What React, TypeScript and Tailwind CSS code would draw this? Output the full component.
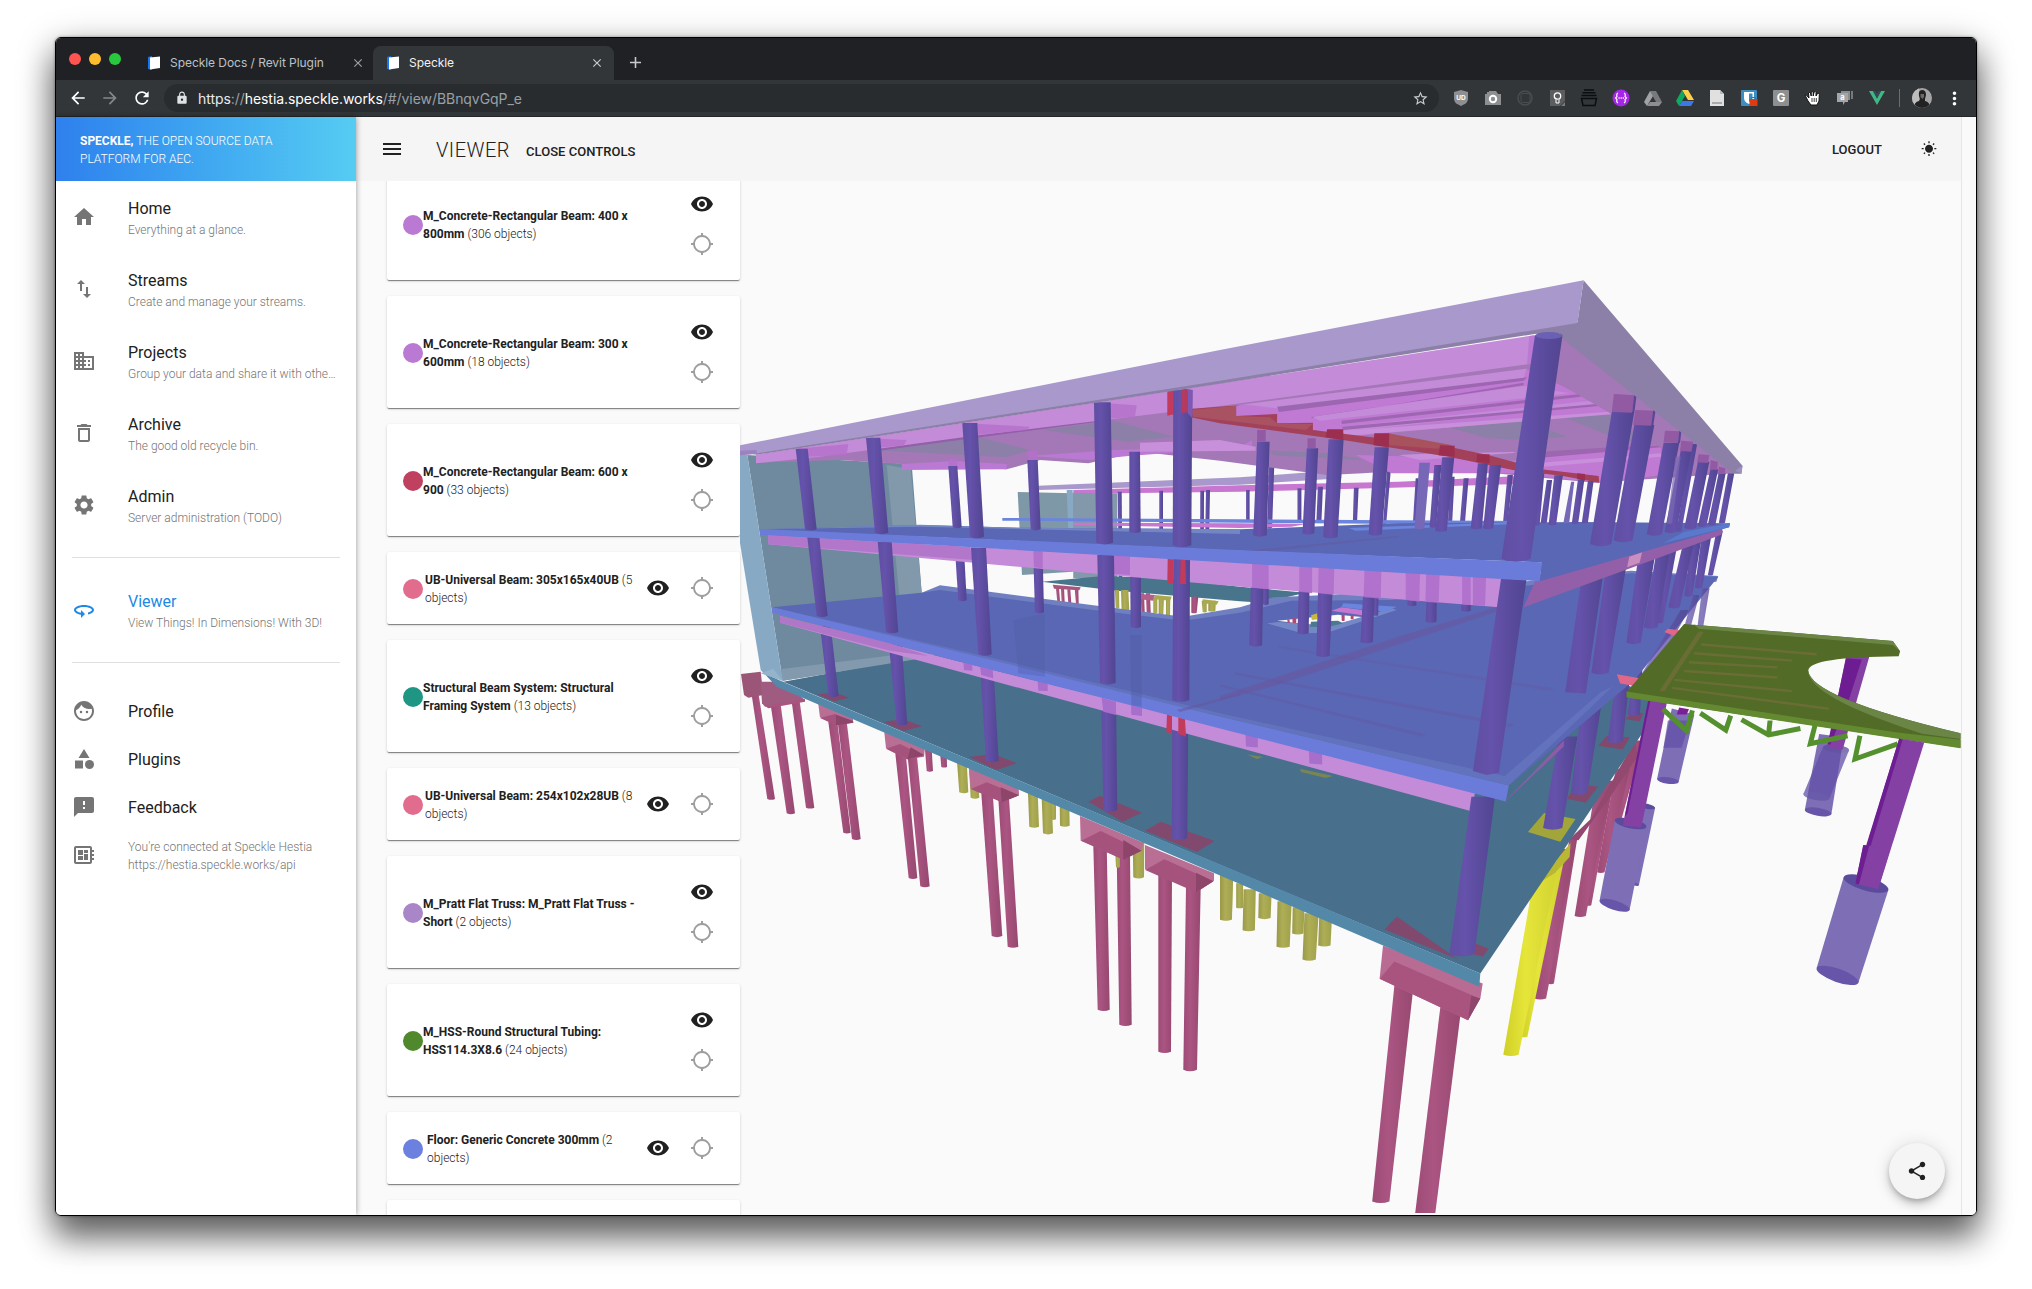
import React from "react";
import {
  MdHome, MdImportExport, MdBusiness, MdDeleteOutline, MdSettings, Md360, MdFace, MdCategory,
  MdFeedback, MdDeveloperBoard, MdVisibility, MdLocationSearching, MdShare, MdWbSunny, MdMenu,
  MdLock, MdArrowBack, MdArrowForward, MdRefresh, MdStarBorder, MdMoreVert, MdClose, MdAdd,
} from "react-icons/md";

/* ---------- 3D model ---------- */

// The model is laid out on four sheets, each with its own origin and scale.
const SHEETS: Record<string, [number, number, number, number]> = {
  a: [740, 260, 1 / 3, 1 / 3],
  b: [1220, 260, 1 / 2.8, 1 / 3],
  c: [740, 660, 1 / 3, 1 / 3],
  d: [1220, 620, 770 / 1568, 630 / 1568],
};
const xy = (s: string, x: number, y: number): [number, number] => {
  const [ox, oy, sx, sy] = SHEETS[s];
  return [ox + x * sx, oy + y * sy];
};
const at = (s: string, x: number, y: number) => xy(s, x, y).map((v) => v.toFixed(1)).join(",");
const P = ({ f, p, o = 1 }: { f: string; p: string; o?: number }) => (
  <polygon
    fill={f}
    opacity={o}
    points={p.split(" ").map((t) => {
      const [x, y] = t.slice(1).split(",").map(Number);
      return at(t[0], x, y);
    }).join(" ")}
  />
);
// left/right/y at the top, then left/right/y at the bottom
type Col = [number, number, number, number, number, number];
const Cols = ({ s, list, f = "url(#col)", o = 1 }: { s: string; list: Col[]; f?: string; o?: number }) => (
  <g opacity={o}>
    {list.map(([l, r, y, l2, r2, y2], i) => {
      const [p1, p2, p3, p4, m] = [at(s, l, y), at(s, r, y), at(s, r2, y2), at(s, l2, y2), at(s, (l2 + r2) / 2, y2 + (r2 - l2) * 0.22)];
      return <path key={i} fill={f} d={`M${p1}L${p2}L${p3}Q${m} ${p4}Z`} />;
    })}
  </g>
);
// Translucent footing: top-left, top-right, bottom-right, bottom-left corners on sheet d
const Footing = ({ q, top = true, f = "#7d6eb5", o = 1 }: { q: number[]; top?: boolean; f?: string; o?: number }) => {
  const [A, B, C, D] = [0, 2, 4, 6].map((i) => xy("d", q[i], q[i + 1]));
  const cap = (L: number[], R: number[], fill: string) => {
    const [cx, cy] = [(L[0] + R[0]) / 2, (L[1] + R[1]) / 2];
    const rx = Math.hypot(R[0] - L[0], R[1] - L[1]) / 2;
    const deg = (Math.atan2(R[1] - L[1], R[0] - L[0]) * 180) / Math.PI;
    return <ellipse cx={cx} cy={cy} rx={rx} ry={rx * 0.3} transform={`rotate(${deg} ${cx} ${cy})`} fill={fill} />;
  };
  return (
    <g opacity={o}>
      <polygon points={[A, B, C, D].map((v) => v.join(",")).join(" ")} fill={f} />
      {top && cap(A, B, "#5b4b9d")}
      {cap(D, C, "#6655a8")}
    </g>
  );
};

const PINK = "#c48bd8";
const MAG = "#ba79d2";
const DIM = "#a477b6";

function Model() {
  return (
    <svg className="block h-[1032px] w-[1221px]" viewBox="740 181 1221 1032">
      <defs>
        <linearGradient id="col"><stop offset="0" stopColor="#5f4fa2" /><stop offset=".35" stopColor="#6552ab" /><stop offset="1" stopColor="#514591" /></linearGradient>
        <linearGradient id="pile"><stop offset="0" stopColor="#9c4c76" /><stop offset=".4" stopColor="#ab5582" /><stop offset="1" stopColor="#964870" /></linearGradient>
        <linearGradient id="olive"><stop offset="0" stopColor="#98984a" /><stop offset=".4" stopColor="#aeae56" /><stop offset="1" stopColor="#a0a04c" /></linearGradient>
        <linearGradient id="yel"><stop offset="0" stopColor="#cfcf28" /><stop offset=".4" stopColor="#e5e53a" /><stop offset="1" stopColor="#d2d232" /></linearGradient>
      </defs>

      {/* rear wing */}
      <P f="#a898cc" p="a895,677 a1500,652 b340,630 b340,655 a1500,674 a895,690" />
      <P f="#c777d0" p="a1000,690 a1500,676 b500,665 b900,645 b900,670 b480,683 a1500,695 a1000,701" />
      <P f="#7f98a8" p="a833,696 a998,700 a998,935 a846,945" />
      <P f="#8398ab" p="a998,698 a1132,700 a1132,958 a1000,955" />
      <P f="#87a9c3" p="a980,690 a998,690 a1000,808 a985,808" />
      <Cols s="a" list={[[1133, 1145, 695, 1137, 1147, 975], [1258, 1269, 692, 1258, 1269, 986], [1381, 1392, 692, 1380, 1391, 980], [1398, 1410, 690, 1393, 1404, 998]]} />
      <Cols s="b" list={[[73, 83, 690, 73, 83, 780], [217, 228, 685, 217, 228, 782], [375, 388, 683, 372, 384, 782], [274, 288, 680, 270, 284, 785], [138, 153, 588, 132, 146, 803], [470, 481, 595, 455, 464, 810], [548, 556, 655, 540, 550, 790], [682, 696, 655, 672, 686, 786], [645, 657, 650, 638, 650, 790], [805, 820, 645, 792, 805, 792]]} />
      <P f="#6b85dc" p="a787,774 a1500,778 b850,783 b850,794 a1500,788 a787,782" />
      <P f="#c777d0" p="a1000,788 a1500,790 b240,792 b200,800 a1500,804 a1000,795" />
      <P f="#48748c" p="a905,965 a1090,948 a1280,955 a1500,980 b240,998 b120,1028 a1500,1024 a1130,992" />
      <Cols s="a" f="url(#pile)" list={[[948, 957, 985, 952, 960, 1025], [963, 972, 985, 965, 974, 1028], [982, 991, 988, 985, 994, 1030], [1004, 1015, 985, 1008, 1016, 1032], [1202, 1212, 1000, 1204, 1214, 1056], [1218, 1230, 1000, 1220, 1232, 1058], [1354, 1375, 1010, 1354, 1370, 1058]]} />
      <P f="#a8557e" p="a938,974 a1022,982 a1018,991 a942,986" />
      <P f="#b0608a" p="a1198,1002 a1245,1005 a1240,1022 a1198,1018" />
      <Cols s="a" f="url(#olive)" list={[[1125, 1137, 990, 1127, 1138, 1045], [1143, 1165, 990, 1145, 1168, 1052], [1240, 1252, 1010, 1240, 1252, 1058], [1256, 1272, 1010, 1256, 1270, 1062], [1278, 1291, 1010, 1278, 1290, 1066], [1385, 1400, 1022, 1388, 1400, 1056], [1405, 1428, 1022, 1405, 1426, 1053]]} />
      <P f="#aaa94f" p="a1245,1005 a1295,1010 a1290,1022 a1245,1018" />
      <P f="#aaa94f" p="a1388,1018 a1436,1024 a1430,1034 a1388,1030" />

      {/* piles and pile caps below the slab */}
      <Cols s="c" f="url(#pile)" list={[[35, 56, 105, 82, 105, 417], [92, 122, 135, 140, 165, 460], [155, 179, 125, 198, 223, 443], [265, 292, 185, 310, 332, 518], [293, 320, 185, 336, 362, 537], [466, 497, 280, 506, 532, 654], [503, 531, 290, 541, 569, 679], [555, 575, 268, 560, 579, 333], [601, 620, 285, 604, 621, 321], [724, 758, 400, 755, 787, 828], [775, 807, 415, 803, 835, 860], [1060, 1100, 555, 1073, 1109, 1049], [1130, 1170, 585, 1138, 1175, 1094], [1255, 1296, 645, 1255, 1293, 1175], [1338, 1382, 680, 1330, 1371, 1229]]} />
      <Cols s="c" f="url(#olive)" list={[[651, 680, 305, 658, 685, 397], [687, 712, 325, 692, 718, 413], [864, 893, 400, 868, 897, 500], [930, 948, 430, 932, 948, 478], [905, 935, 415, 909, 939, 520], [959, 988, 435, 960, 989, 497], [1126, 1140, 580, 1128, 1140, 622], [1178, 1213, 545, 1180, 1212, 652], [1442, 1478, 645, 1440, 1476, 777]]} />
      <Cols s="d" f="url(#olive)" list={[[0, 27, 630, 0, 24, 746], [33, 47, 655, 33, 47, 716], [48, 73, 670, 46, 71, 772], [79, 105, 680, 78, 103, 742], [148, 172, 715, 147, 170, 780], [117, 146, 700, 115, 142, 813], [202, 228, 740, 200, 225, 810], [172, 201, 730, 168, 195, 845]]} />
      <P f="#9b5577" p="c3,42 c62,35 c70,105 c25,113 c12,105" />
      <P f="#9f5c80" p="c62,65 c130,65 c195,120 c75,140 c66,130" />
      <P f="#a9547f" p="c75,137 c195,117 c195,125 c85,145" />
      {["c234,125 c240,172 c285,192 c340,188 c338,172", "c432,208 c438,265 c500,298 c552,290 c555,262", "c687,325 c692,385 c785,425 c837,405 c836,385", "c1020,468 c1022,542 c1150,598 c1206,572 c1210,548", "c1215,555 c1215,628 c1370,696 c1422,662 c1422,640"].map((p) => <P key={p} f="#b96e94" p={p} />)}
      {["c285,162 c240,174 c288,196 c340,188", "c480,252 c438,266 c502,298 c552,288", "c740,367 c692,387 c785,427 c837,406", "c1082,513 c1024,542 c1150,599 c1204,572", "c1273,598 c1216,630 c1368,697 c1420,664"].map((p) => <P key={p} f="#a5527c" p={p} />)}
      {["c288,164 c338,182 c340,188 c288,196", "c512,262 c552,285 c502,298", "c782,382 c837,406 c785,427", "c1150,540 c1204,572 c1150,599", "c1368,638 c1420,664 c1368,697"].map((p) => <P key={p} f="#8d456a" p={p} />)}
      <Cols s="d" f="url(#pile)" list={[[845, 862, 300, 800, 812, 520], [806, 835, 370, 768, 783, 628], [778, 802, 400, 744, 756, 710], [764, 795, 420, 722, 745, 737], [712, 728, 540, 668, 680, 905], [690, 722, 570, 640, 664, 942]]} />
      <P f="#92486f" p="d712,545 d755,495 d845,300 d850,340 d800,430 d730,548" />
      <Cols s="d" f="url(#yel)" list={[[672, 700, 600, 612, 626, 1037], [645, 690, 600, 577, 608, 1082]]} />
      <P f="#b8b833" p="d655,650 d690,590 d714,555 d712,590 d682,630" />
      <Cols s="d" f="url(#pile)" list={[[356, 395, 900, 310, 345, 1447], [450, 493, 950, 396, 437, 1490]]} />
      <P f="#b86c93" p="d332,810 d325,893 d505,996 d530,942 d535,905" />
      <P f="#a9547f" p="d355,850 d528,942 d505,996 d325,893" />
      <P f="#8f466c" p="d530,942 d505,996 d512,935" />

      {/* shear wall on the left */}
      <P f="#6f8a9e" p="a22,585 a515,612 a545,998 a575,1190 a128,1262" />
      <P f="#8298ab" p="a440,615 a512,628 a545,998 a478,1008" />
      <P f="#708ba0" p="a440,1000 a478,1003 a500,1200 a440,1200" />

      {/* ground slab */}
      <P f="#48708c" p="c130,65 a580,1183 b500,1100 b1160,1130 d825,160 d905,200 d530,880 c1500,640" />
      <P f="#5388a9" p="c72,40 c135,68 c1500,638 d530,880 d528,913 c1500,672 c110,80" />
      <P f="#839aae" p="a120,1228 a520,1178 a575,1190 a500,1202 a128,1262" />
      <P f="#87a9c4" p="a0,585 a22,585 a128,1262 a75,1244 a62,1230 a0,850" />
      <P f="#95b4cc" p="a62,1240 a100,1226 a128,1262" />
      {["c232,103 c288,98 c328,113 c282,124", "c430,185 c490,178 c547,199 c490,213", "c687,291 c760,282 c831,310 c770,330", "c1045,425 c1080,407 c1206,458 c1148,485", "c1215,512 c1262,485 c1424,543 c1370,576", "d335,770 d360,738 d485,845", "d520,805 d547,818 d535,838 d505,828", "d706,445 d728,408 d770,415 d745,455", "d770,313 d788,288 d835,292 d820,322", "d826,247 d840,228 d862,232 d855,252"].map((p) => <P key={p} f="#82496e" p={p} />)}
      <P f="#a2a63a" p="d627,528 d660,480 d724,495 d693,552" />
      <P f="#7a8552" p="d163,370 d230,388 d215,393 d165,378" />
      <P f="#7a8552" p="d55,335 d88,341 d75,346" />
      <Cols s="a" list={[[240, 272, 1098, 265, 296, 1308], [446, 485, 1150, 470, 502, 1393], [720, 760, 1215, 738, 776, 1503], [1083, 1128, 1305, 1090, 1132, 1650], [1297, 1345, 1365, 1295, 1342, 1735]]} />
      <Cols s="d" list={[[848, 862, 80, 830, 855, 235], [690, 728, 290, 658, 697, 518], [738, 778, 200, 714, 748, 431], [806, 834, 150, 789, 820, 303]]} />

      {/* first floor */}
      <P f="#c48bd8" p="a120,1068 c640,0 d0,265 d520,425 d512,476 d0,305 c1500,265 c530,0 a120,1088" />
      <P f="#b077c9" p="a120,1068 a440,1145 a565,1188 a450,1172 a120,1088" />
      {["c670,0 c697,12 c697,32 c672,30", "c720,18 c758,28 c760,55 c724,45", "c893,62 c923,72 c923,93 c895,92", "c1085,113 c1128,125 c1128,165 c1090,155", "c1173,130 c1206,142 c1206,168 c1174,164", "d52,285 d77,292 d77,317 d53,315", "d181,325 d208,333 d208,360 d182,357"].map((p) => <P key={p} f="#a86ecb" p={p} />)}
      <P f="#8c5ca6" p="d582,450 d700,300 d700,315 d565,470" />
      <Cols s="d" list={[[512, 560, 440, 467, 518, 832]]} />
      <P f="#c23a5c" p="c1281,163 c1296,168 c1296,220 c1279,217" />
      <P f="#c23a5c" p="c1315,172 c1335,178 c1338,230 c1315,222" />
      <P f="#6f7fc0" p="a545,998 a600,976 a1060,1036 a1330,1070 a1500,1042 b150,1012 b300,1005 b800,970 b1150,932 b1395,948 b1390,965 b800,1020 b0,1100 a1060,1100" />
      <P f="#5a67b4" p="a97,1042 a545,998 a600,990 a1060,1050 a1330,1082 a1500,1058 b200,1022 b480,1020 b800,985 b1150,940 b1395,950 d844,149 d588,412 c740,0" />
      <P f="#6b7bc4" p="a97,1042 c740,0 d0,240 d588,412 d800,165 d775,180 d580,388 d0,232 c760,-6" o={0.55} />
      <P f="#6a7bda" p="a97,1042 c740,-4 d0,240 d588,412 d582,452 d0,270 c1080,112 c640,0 a97,1058" />
      <P f="#fafafa" p="b160,1082 b330,1064 b405,1072 b300,1100" />
      <Cols s="b" f="#b04a72" list={[[188, 194, 1078, 190, 196, 1090], [203, 214, 1074, 203, 213, 1090], [340, 349, 1064, 341, 349, 1082], [366, 374, 1066, 366, 374, 1077]]} />
      <P f="#7388c4" p="b132,1090 b165,1086 b310,1098 b480,1045 b495,1050 b300,1118 b230,1120" />
      <P f="#c777d0" p="b312,1052 b340,1042 b398,1050 b398,1066" />
      <P f="#6a85de" p="b345,1030 b495,1040 b465,1055 b340,1042" />
      <P f="#c9b93a" p="b255,1066 b273,1060 b273,1078 b257,1080" />
      <P f="#4a7a8e" p="b255,1085 b330,1082 b345,1090 b300,1102 b252,1100" />
      <P f="#6658a0" p="b780,1040 b810,1042 b300,1225 b160,1275 d0,200 d0,190 b500,1130" o={0.7} />
      <P f="#6658a0" p="d30,130 d600,260 d590,266 d30,136" o={0.45} />
      <P f="#6658a0" p="d0,160 d420,285 d410,290 d0,166" o={0.4} />
      <P f="#6658a0" p="c1310,150 c1500,100 c1500,106 c1320,156" o={0.6} />
      <P f="#6658a0" p="d120,65 d680,170 d670,176 d120,70" o={0.35} />
      <P f="#4f5ca6" p="a820,1080 a915,1060 a915,1250 a835,1240" o={0.35} />
      <P f="#4f5ca6" p="a1170,1125 a1205,1125 a1205,1340 a1174,1335" o={0.4} />

      {/* columns of the first floor */}
      <Cols s="a" list={[[645, 672, 870, 655, 680, 1021], [880, 908, 890, 885, 912, 1057], [1170, 1203, 890, 1172, 1203, 1101]]} />
      <Cols s="b" list={[[118, 136, 930, 120, 136, 1033], [523, 548, 960, 525, 550, 1036], [676, 702, 960, 676, 702, 1052], [580, 608, 955, 576, 606, 1085], [88, 122, 915, 82, 118, 1156], [222, 252, 920, 217, 248, 1120], [276, 318, 925, 270, 307, 1187], [430, 445, 935, 430, 443, 1066], [405, 435, 930, 393, 428, 1146]]} />
      <Cols s="b" list={[[1390, 1408, 812, 1366, 1380, 945], [1350, 1378, 815, 1330, 1350, 983], [1322, 1350, 825, 1300, 1322, 1008], [1300, 1330, 835, 1255, 1287, 1042], [1255, 1282, 845, 1225, 1240, 1088], [1225, 1262, 855, 1187, 1225, 1102], [1175, 1222, 862, 1138, 1178, 1148], [1085, 1142, 890, 1040, 1088, 1238]]} />
      <Cols s="b" o={0.75} list={[[1350, 1371, 985, 1337, 1353, 1100], [1325, 1342, 1005, 1300, 1318, 1100], [1290, 1312, 1050, 1170, 1205, 1260]]} />
      <P f="url(#col)" p="b1018,908 b1078,905 d745,183 d703,180" />

      {/* second floor */}
      <P f="#935fa8" p="b890,945 b1408,800 b1404,824 b850,1042" />
      <P f="#c98fc0" p="b1146,890 b1182,877 b1175,908 b1140,922" />
      <P f={PINK} p="a85,826 b0,903 b790,955 b782,1042 b0,975 a85,853" />
      <P f="#b277ca" p="a85,826 a690,862 a700,900 a85,853" />
      {["a735,868 a740,905 a710,900 a705,865", "a880,872 a908,874 a908,925 a882,922", "a1088,885 a1170,888 a1170,945 a1090,940", "b90,908 b136,910 b136,988 b90,983", "b222,915 b258,917 b258,1000 b222,995", "b276,918 b320,920 b318,1005 b275,1000", "b405,925 b452,928 b450,1016 b402,1012", "b520,935 b560,938 b558,1025 b520,1020", "b577,940 b615,942 b612,1028 b575,1026", "b678,948 b702,950 b702,1035 b678,1033", "b708,950 b745,952 b742,1037 b708,1034"].map((p) => <P key={p} f="#ad6dca" p={p} o={0.85} />)}
      <Cols s="a" list={[[202, 238, 832, 230, 263, 1067], [413, 455, 846, 438, 475, 1116], [693, 738, 863, 715, 755, 1183], [1072, 1122, 885, 1080, 1127, 1268], [1300, 1350, 897, 1297, 1348, 1320]]} />
      <P f="#c23a5c" p="a1283,897 a1301,898 a1299,970 a1282,970" />
      <P f="#c23a5c" p="a1322,900 a1336,900 a1338,972 a1320,972" />
      <P f="url(#col)" p="b787,955 b858,960 d568,380 d543,386 d515,376" />
      <P f="#5a67b4" p="a60,808 a540,795 a835,803 a1500,808 b500,790 b1000,786 b1428,790 b1425,802 b895,964 b900,907 b0,870" />
      <P f="#7386c4" p="a60,808 a540,794 a835,803 a1500,808 a1500,822 a1190,815 a540,800" />
      <P f="#6b85dc" p="b360,804 b830,786 b830,792 b380,812" />
      <P f="#6658a0" p="b0,880 b500,828 b500,832 b60,882" o={0.5} />
      <P f="#6a7bda" p="a60,807 b0,868 b902,907 b895,964 b0,906 a60,824" />
      <P f="#5a78cc" p="b1300,815 b1428,789 b1426,802 b1240,850" />

      {/* roof soffit and beams */}
      <P f={DIM} p="a50,586 b0,380 b880,230 b960,230 b1440,640 b1050,668 b620,625 b400,640 b300,645 b0,602 a1200,575 a1045,610 a900,600 a800,628 a485,612 a300,600 a50,608" />
      <P f="#8c80a8" p="a300,565 a670,520 a870,570 a800,592" />
      <P f="#8c80a8" p="a910,510 a1120,482 a1300,530 a1165,545" />
      <P f="#8c80a8" p="b140,572 b300,580 b400,598 b380,600 b150,586" />
      <P f="#8c80a8" p="b640,502 b840,475 b970,530 b780,545" />
      <P f="#8c80a8" p="b960,470 b1095,465 b1200,548 b1120,540" />
      <P f="#c07ad4" p="b380,585 b560,590 b820,602 b1235,552 b1235,600 b1280,640 b1060,668 b820,640 b480,640" />
      <P f="#c88fdb" p="b500,585 b800,570 b830,578 b560,600" />
      <P f="#c88fdb" p="b850,612 b1235,580 b1235,590 b850,625" />
      <P f="#9c66b0" p="b830,580 b1120,560 b1235,556 b1235,562 b880,595" />
      <P f={DIM} p="b470,518 b850,540 b840,575 b650,580" />
      <P f={MAG} p="a485,612 a640,603 a800,612 a800,628 a485,630" />
      <P f={MAG} p="a862,588 a1120,570 a1500,560 b90,540 b90,560 a1165,588 a1045,600" />
      <P f="#c88fdb" p="a1200,548 a1440,540 b100,560 b100,572 a1200,575" />
      <P f="#c07ad4" p="b40,430 b860,328 b1010,405 b1095,460 b350,530 b260,510 b160,490 b45,468" />
      <P f={PINK} p="b40,430 b860,320 b850,355 b160,445" />
      <P f="#9c66b0" p="b160,440 b860,352 b850,362 b165,456" />
      <P f="#9c66b0" p="b255,475 b850,368 b850,376 b258,470" />
      <P f={PINK} p="b258,470 b850,378 b980,400 b280,482" />
      <P f="#9c66b0" p="b340,482 b1010,402 b1010,410 b342,492" />
      <P f={PINK} p="b342,500 b1040,422 b1055,432 b350,515" />
      <P f="#9c66b0" p="b342,500 b1055,432 b1060,438 b345,510" />
      <P f="#c88fdb" p="b345,512 b1090,455 b1095,463 b350,528" />
      <P f={DIM} p="b0,428 b862,308 b866,325 b45,436" />
      <P f={DIM} p="b940,365 b960,230 b1440,640 b1230,560 b1110,470" />
      <P f="#935fa8" p="a385,566 a680,528 a1062,478 a1115,480 a720,532 a395,575" />
      <P f={PINK} p="a48,584 b0,370 b880,226 b868,312 b0,438 a680,530 a240,590 a48,610" />
      {["a172,566 a325,552 a320,585 a175,592", "a383,535 a500,540 a492,556 a385,566", "a678,490 a870,500 a860,510 a680,528", "a1078,428 a1190,436 a1185,470 a1080,478", "a625,596 a652,594 a652,618 a627,619", "a862,572 a893,571 a893,600 a863,600"].map((p) => <P key={p} f="#b56fcc" p={p} o={0.8} />)}
      <P f="#a3405a" p="a1345,447 a1500,436 b45,435 b45,468 b160,462 b160,490 b260,488 b260,510 b640,560 b750,585 b900,628 b1060,648 b1062,668 b960,648 b820,630 b640,590 b345,540 b0,490 a1345,470" />
      <P f="#a85262" p="a1350,450 b45,437 b45,468 b140,472 b160,490 b260,492 b240,510 a1360,470" />
      <P f="#a8525e" p="b470,520 b650,556 b610,566 b475,556" />
      {["b300,508 b345,508 b345,540 b296,532", "b432,520 b474,520 b472,562 b430,556", "b616,556 b657,557 b657,590 b612,586", "b720,583 b755,583 b755,610 b718,606", "b1000,640 b1022,642 b1022,662 b1000,658"].map((p) => <P key={p} f="#9c2f50" p={p} />)}

      {/* columns of the second floor */}
      <Cols s="a" list={[[167, 203, 566, 195, 230, 808], [378, 421, 533, 405, 445, 818], [625, 652, 618, 638, 665, 802], [667, 712, 489, 690, 732, 830], [862, 893, 600, 872, 902, 808], [1062, 1112, 427, 1069, 1119, 848], [1168, 1200, 575, 1168, 1202, 815]]} />
      <Cols s="b" f="#7668b6" list={[[558, 588, 608, 545, 572, 805], [983, 992, 665, 962, 978, 786]]} />
      <Cols s="b" list={[[600, 620, 615, 587, 605, 802], [104, 139, 545, 93, 131, 826], [243, 275, 565, 231, 264, 820], [304, 346, 538, 289, 329, 831], [433, 473, 562, 416, 453, 823], [622, 656, 592, 603, 635, 812], [722, 750, 610, 702, 733, 805], [755, 787, 615, 737, 765, 805], [915, 930, 660, 898, 915, 788], [936, 960, 646, 920, 941, 794], [890, 908, 640, 880, 895, 795], [1002, 1020, 660, 985, 1003, 790], [1030, 1046, 663, 1013, 1030, 788]]} />
      <Cols s="b" list={[[1422, 1440, 640, 1397, 1414, 788], [1396, 1416, 640, 1366, 1387, 794], [1373, 1395, 628, 1338, 1362, 798], [1338, 1370, 605, 1300, 1333, 804], [1320, 1336, 552, 1278, 1292, 814], [1290, 1320, 572, 1245, 1278, 815], [1242, 1286, 548, 1195, 1237, 823], [1160, 1216, 495, 1102, 1155, 841], [1097, 1160, 456, 1036, 1096, 852]]} />
      <Cols s="b" f="#7a69b4" o={0.7} list={[[1275, 1290, 590, 1252, 1266, 790]]} />
      {["b1103,402 b1160,406 b1154,458 b1097,456", "b1163,450 b1213,452 b1207,497 b1157,495", "b1246,512 b1286,514 b1282,549 b1242,547", "b1292,542 b1325,545 b1320,575 b1288,573", "b1340,583 b1370,585 b1366,609 b1336,607", "b1374,600 b1394,606 b1392,630 b1372,628", "b1397,620 b1415,625 b1413,642 b1395,642", "b104,510 b128,510 b128,545 b104,545", "b245,535 b268,535 b268,564 b245,564"].map((p) => <P key={p} f="#925aa2" p={p} />)}
      {["b1160,402 b1167,402 b1160,458 b1154,458", "b1213,450 b1220,450 b1213,497 b1207,497", "b1286,512 b1292,514 b1288,549 b1282,549"].map((p) => <P key={p} f="#5a4798" p={p} />)}
      <P f="#c23a5c" p="a1282,394 a1302,390 a1302,463 a1282,467" />
      <Cols s="a" list={[[1300, 1357, 390, 1298, 1354, 856]]} />
      <P f="#b53a60" p="a1323,388 a1343,386 a1343,457 a1323,460" />
      <P f="#7d58b4" p="a1343,387 a1358,390 a1357,475 a1343,460" />
      <P f={MAG} p="b866,228 b884,226 b876,310 b860,312" />

      {/* roof slab */}
      <P f="#8c80a8" p="a0,575 b0,360 b1001,186 b1018,61 b1463,617 b1460,641 b1438,641 b960,237 b950,219 b880,222 b0,371 a50,584" />
      <P f="#a898cc" p="a0,556 b0,270 b1018,61 b1001,189 b0,362 a50,580 a0,586" />
      <P f="#9c90be" p="b1442,632 b1463,617 b1460,641" />
      <P f="#9b82c0" p="a0,572 a50,570 a50,582 a0,586" />
      <Cols s="b" list={[[882, 959, 226, 788, 870, 896]]} />
      <ellipse cx="1549" cy="335.500" rx="13.500" ry="3.500" fill="#6a60b4" />

      {/* canopy */}
      <P f="#e06788" p="d905,30 d912,22 d960,30 d925,40" />
      <P f="#e06788" p="d808,135 d870,148 d845,164 d815,158" />
      <Footing top={false} q={[920, 220, 966, 235, 934, 403, 890, 396]} />
      <Footing top={false} q={[1220, 284, 1270, 292, 1245, 483, 1191, 472]} />
      <Footing f="#6350a8" o={0.75} q={[1228, 316, 1281, 324, 1241, 444, 1188, 433]} />
      <P f="#6350a8" o={0.75} p="d912,250 d958,250 d940,318 d903,318" />
      <Footing q={[852, 459, 886, 468, 853, 660, 835, 655]} />
      <Footing q={[804, 498, 868, 515, 834, 722, 773, 698]} />
      <P f="#8540a3" p="d872,200 d910,205 d858,516 d820,512" />
      <P f="#6d1e92" p="d872,200 d876,202 d830,480 d824,490" />
      <P f="#7a1f98" p="d935,218 d955,222 d950,235 d930,235" />
      <P f="#8540a3" p="d1275,90 d1322,92 d1268,322 d1237,318" />
      <P f="#6e1c92" p="d1275,95 d1307,98 d1280,200 d1243,310 d1237,310" />
      <path d={`M${at("d", 828, 180)}L${at("d", 945, 10)}L${at("d", 1370, 52)}L${at("d", 1385, 78)}L${at("d", 1382, 90)}Q${at("d", 1200, 92)} ${at("d", 1198, 125)}Q${at("d", 1200, 192)} ${at("d", 1508, 282)}L${at("d", 1508, 318)}L${at("d", 828, 192)}Z`} fill="#526b27" />
      <path d={`M${at("d", 1198, 125)}Q${at("d", 1200, 192)} ${at("d", 1508, 282)}L${at("d", 1508, 296)}L${at("d", 1430, 283)}Q${at("d", 1195, 190)} ${at("d", 1198, 125)}Z`} fill="#6a8546" />
      <P f="#6a8546" p="d965,12 d1370,52 d1385,78 d1370,62 d975,22" />
      <P f="#638a30" p="d828,178 d1380,280 d1508,298 d1508,319 d828,193" />
      {["d980,58 d1215,82 d1215,88 d980,64", "d965,80 d1165,98 d1165,104 d965,86", "d955,102 d1135,115 d1135,121 d955,108", "d945,124 d1135,140 d1135,146 d945,130", "d925,146 d1165,174 d1165,180 d925,152", "d920,166 d1240,218 d1240,224 d920,172", "d975,28 d985,30 d905,178 d895,176"].map((p) => <P key={p} f="#6e6f38" p={p} o={0.85} />)}
      <path
        d={[[902, 222, 950, 276, 962, 225], [978, 232, 1030, 274, 1040, 238], [1062, 248, 1117, 286, 1182, 270], [1117, 286, 1120, 252, 1120, 250], [1212, 260, 1202, 308, 1278, 288], [1303, 288, 1293, 346, 1380, 308]].map((q) => `M${at("d", q[0], q[1])}L${at("d", q[2], q[3])}L${at("d", q[4], q[5])}`).join("")}
        fill="none" stroke="#55902f" strokeWidth="5" />
      <P f="#8540a3" p="d1383,295 d1434,305 d1340,672 d1292,662" />
      <P f="#6d1e92" p="d1383,295 d1390,298 d1300,664 d1292,655" />
      <Footing q={[1270, 640, 1361, 672, 1300, 903, 1215, 866]} />
      <P f="#8540a3" p="d1310,560 d1365,570 d1340,670 d1294,656" />
      <P f="#6d1e92" p="d1310,560 d1322,562 d1301,658 d1294,656" />
    </svg>
  );
}

/* ---------- sidebar ---------- */

const NAV = [
  { t: "Home", s: "Everything at a glance.", I: MdHome },
  { t: "Streams", s: "Create and manage your streams.", I: MdImportExport },
  { t: "Projects", s: "Group your data and share it with othe…", I: MdBusiness },
  { t: "Archive", s: "The good old recycle bin.", I: MdDeleteOutline },
  { t: "Admin", s: "Server administration (TODO)", I: MdSettings },
];

function NavItem({ t, s, I, active = false }: { t: string; s: string; I: React.ElementType; active?: boolean }) {
  return (
    <div className="flex h-[72px] items-center pl-4">
      <I className={active ? "size-6 shrink-0 text-[#1e88e5]" : "size-6 shrink-0 text-[#757575]"} />
      <div className="ml-8 min-w-0 flex-1 pt-[2px]">
        <div className={active ? "text-[16px] leading-6 text-[#1e88e5]" : "text-[16px] leading-6 text-[#212121]"}>{t}</div>
        <div className="text-[12px] leading-[18px] font-light whitespace-nowrap text-[#757575]">{s}</div>
      </div>
    </div>
  );
}

function Sidebar() {
  return (
    <aside className="z-10 w-[300px] shrink-0 bg-white shadow-[0_0_6px_rgba(0,0,0,0.4)]">
      <div className="flex h-16 items-center bg-linear-to-r from-[#2f80ed] to-[#56ccf2] px-6 pt-[2px] text-[12px] leading-[18px] font-light text-white">
        <div className="w-[215px]"><b className="font-bold">SPECKLE,</b> THE OPEN SOURCE DATA PLATFORM FOR AEC.</div>
      </div>
      {NAV.map((n) => <NavItem key={n.t} {...n} />)}
      <div className="mx-4 my-4 h-px bg-[#e0e0e0]" />
      <NavItem t="Viewer" s="View Things! In Dimensions! With 3D!" I={Md360} active />
      <div className="mx-4 my-4 h-px bg-[#e0e0e0]" />
      <div className="pt-2">
        {[{ t: "Profile", I: MdFace }, { t: "Plugins", I: MdCategory }, { t: "Feedback", I: MdFeedback }].map(({ t, I }) => (
          <div key={t} className="flex h-12 items-center gap-8 pl-4">
            <I className="size-6 text-[#757575]" />
            <span className="pt-[2px] text-[16px] text-[#212121]">{t}</span>
          </div>
        ))}
        <div className="flex h-12 items-center gap-8 pl-4">
          <MdDeveloperBoard className="size-6 text-[#757575]" />
          <div className="pt-[2px] text-[12px] leading-[18px] font-light text-[#757575]">
            You're connected at Speckle Hestia<br />https://hestia.speckle.works/api
          </div>
        </div>
      </div>
    </aside>
  );
}

/* ---------- layer cards ---------- */

const LAYERS = [
  { dot: "bg-[#ba79d2]", tall: true, n: ["M_Concrete-Rectangular Beam: 400 x", "800mm"], c: ["", "(306 objects)"] },
  { dot: "bg-[#ba79d2]", tall: true, n: ["M_Concrete-Rectangular Beam: 300 x", "600mm"], c: ["", "(18 objects)"] },
  { dot: "bg-[#bf405f]", tall: true, n: ["M_Concrete-Rectangular Beam: 600 x", "900"], c: ["", "(33 objects)"] },
  { dot: "bg-[#e16c8e]", tall: false, n: ["UB-Universal Beam: 305x165x40UB", ""], c: ["(5", "objects)"] },
  { dot: "bg-[#1f9584]", tall: true, n: ["Structural Beam System: Structural", "Framing System"], c: ["", "(13 objects)"] },
  { dot: "bg-[#e16c8e]", tall: false, n: ["UB-Universal Beam: 254x102x28UB", ""], c: ["(8", "objects)"] },
  { dot: "bg-[#a986c8]", tall: true, n: ["M_Pratt Flat Truss: M_Pratt Flat Truss -", "Short"], c: ["", "(2 objects)"] },
  { dot: "bg-[#50882e]", tall: true, n: ["M_HSS-Round Structural Tubing:", "HSS114.3X8.6"], c: ["", "(24 objects)"] },
  { dot: "bg-[#6c80e0]", tall: false, n: ["Floor: Generic Concrete 300mm", ""], c: ["(2", "objects)"] },
  { dot: "bg-[#ba79d2]", tall: true, n: ["", ""], c: ["", ""] },
];

function Card({ l }: { l: (typeof LAYERS)[number] }) {
  const floor = l.n[0].startsWith("Floor");
  return (
    <div className={`${l.tall ? "h-[112px]" : "h-[72px]"} flex w-[353px] shrink-0 items-start rounded-[2px] bg-white pl-4 shadow-[0_2px_1px_-1px_rgba(0,0,0,0.3),0_1px_1px_rgba(0,0,0,0.2),0_1px_3px_rgba(0,0,0,0.14)]`}>
      <div className={`${l.dot} ${l.tall ? "mt-[47px]" : "mt-[27px]"} size-5 shrink-0 rounded-full`} />
      <div className={`${l.tall ? "mt-[39px] w-[256px]" : floor ? "mt-[19px] w-[211px] pl-1" : "mt-[19px] w-[211px] pl-[2px]"} shrink-0 text-[12px] leading-[18px] font-light whitespace-nowrap text-[#212121]`}>
        {[0, 1].map((i) => <div key={i}><b className="font-bold">{l.n[i]}</b>{l.n[i] && l.c[i] ? " " : ""}{l.c[i]}</div>)}
      </div>
      <div className={l.tall ? "mt-6 ml-[11px] flex flex-col gap-4" : "mt-6 ml-3 flex gap-5"}>
        <MdVisibility className="size-6 text-[#212121]" />
        <MdLocationSearching className="size-6 text-[#9e9e9e]" />
      </div>
    </div>
  );
}

/* ---------- browser chrome ---------- */

const Favicon = () => (
  <svg className="size-3.5 shrink-0" viewBox="0 0 14 14"><path d="M1 1l4-1v14l-4-1z" fill="#1477f0" /><path d="M3 1.500L13 .5v11.500L3 13.500z" fill="#fff" /></svg>
);

const gray = "#8d8f91";
const EXT: React.ReactNode[] = [
  <g key="0"><path d="M9 1l7 2v6c0 5-3 6-7 8-4-2-7-3-7-8V3z" fill={gray} /><text x="9" y="10.500" fontSize="6.500" fontWeight="700" textAnchor="middle" fill="#fff">UD</text></g>,
  <g key="1"><path d="M1 5h2V3h2V2h7l2 3h3v11H1z" fill={gray} /><circle cx="9" cy="10" r="3.200" fill="none" stroke="#fff" strokeWidth="2" /></g>,
  <g key="2"><circle cx="9" cy="9" r="7" fill="none" stroke="#4a4c4e" strokeWidth="1.500" /><rect x="5" y="4.500" width="9" height="9" rx="2" fill="none" stroke="#4a4c4e" /></g>,
  <g key="3"><path d="M2 1h15v11l-5 5H2z" fill="#5b5d5f" /><path d="M17 13v4h-4z" fill="#77797b" /><circle cx="9.500" cy="7" r="3.200" fill="none" stroke="#fff" strokeWidth="1.300" /><path d="M8 10.500V14h3v-3.500" fill="none" stroke="#fff" /></g>,
  <g key="4" fill="none" stroke="#0c0d0e" strokeWidth="1.500"><path d="M4 1h10M2.500 3.800h13M1.500 6.500h15M1.500 9.500h15l-1.500 7H3z" /></g>,
  <g key="5"><circle cx="9" cy="9" r="8.500" fill="#a626e8" /><path d="M6 4Q4 5 5 7.500L3.500 9 5 10.500Q4 13 6 14M12 4q2 1 1 3.500L14.500 9 13 10.500q1 2.500-1 3.500" fill="none" stroke="#fff" strokeWidth="1.100" /><path d="M6.500 9h5.500" stroke="#fff" strokeWidth="1.300" strokeDasharray="1.200 .9" /></g>,
  <g key="6"><path d="M6 2h6l6 11h-6z" fill="#77797b" /><path d="M6 2L0 13l3 4 6-10z" fill="#a0a2a4" /><path d="M3 17h12l3-4H6z" fill="#8c8e90" /></g>,
  <g key="7"><path d="M6 1h6l6 10h-6z" fill="#ffcf48" /><path d="M6 1L0 12l3 5 6-10z" fill="#11a861" /><path d="M3 17h12l3-5H6z" fill="#3b78e7" /></g>,
  <g key="8"><path d="M2 1h10l4 4v12H2z" fill="#e0e0e0" /><path d="M12 1v4h4z" fill="#bbb" /><path d="M4 14h10" stroke="#aaa" strokeWidth="2" /></g>,
  <g key="9"><rect x="1" y="1" width="16" height="16" rx="1" fill="#3c8dc0" /><path d="M4 3h10v6c0 3-2 5-5 6-3-1-5-3-5-6z" fill="#fff" /><path d="M9 4.500h3.500V9c0 2-1.500 3-3.500 4z" fill="#3c8dc0" /><rect x="9.500" y="10" width="8" height="7" fill="#dd3b12" /><path d="M11.500 10V8.500h4V10" stroke="#dd3b12" fill="none" /></g>,
  <g key="10"><rect x="1" y="1" width="16" height="16" rx="1" fill={gray} /><text x="9" y="13" fontSize="11.500" fontWeight="700" textAnchor="middle" fill="#fff">G</text></g>,
  <g key="11"><path d="M1 6q1.500-1 3 2l1 1-.5-5q1-1 2 0l.7 3V3q1-1 2 0v4l.8-4q1.500-1 2 .5L12 7l1.500-2.500q1.500-.5 1.800.8L15 12l-2 4H7L4 12z" fill="#fff" stroke="#111" strokeWidth="1" /><path d="M8 9v4M10.200 9v4M12.300 9v4" stroke="#111" strokeWidth=".8" /></g>,
  <g key="12"><path d="M1 4h11v9H9l-2 3v-3H1z" fill="#a3a5a7" /><path d="M5 2h9v9h-2V4H5z" fill="#8a8c8e" /><path d="M15 2h2v8h-2z" fill="#77797b" /><text x="6.500" y="11" fontSize="7.500" fontWeight="700" textAnchor="middle" fill="#fff">a</text></g>,
  <g key="13"><path d="M1 2h4l4 7.500L13 2h4L9 16z" fill="#41b883" /><path d="M5 2h2.500L9 5l1.500-3H13L9 9.500z" fill="#35495e" /></g>,
];

function Chrome() {
  return (
    <header className="shrink-0 font-[Inter,sans-serif]">
      <div className="flex h-[42px] bg-[#202124] pl-[13px]">
        <div className="flex w-[78px] items-center gap-2 pb-[1px]">
          <i className="size-3 rounded-full bg-[#ff5450]" /><i className="size-3 rounded-full bg-[#ffbd2e]" /><i className="size-3 rounded-full bg-[#28c93f]" />
        </div>
        <div className="mt-2 flex h-[34px] w-[226px] items-center pr-[8px] text-[12px] text-[#bdc1c6]">
          <Favicon /><span className="ml-[9px] flex-1 tracking-[-0.05px]">Speckle Docs / Revit Plugin</span><MdClose className="size-3.5 text-[#9aa0a6]" />
        </div>
        <div className="mt-2 flex h-[34px] w-[241px] items-center rounded-t-lg bg-[#323639] pr-[10px] pl-[13px] text-[12px] text-[#f1f3f4]">
          <Favicon /><span className="ml-[9px] flex-1 tracking-[-0.05px]">Speckle</span><MdClose className="size-3.5 text-[#c8cbce]" />
        </div>
        <MdAdd className="mt-[15px] ml-[12px] size-[19px] text-[#c8cbce]" />
      </div>
      <div className="flex h-[37px] items-center border-b border-[#25282a] bg-[#323639] pl-3">
        <MdArrowBack className="size-5 text-white" />
        <MdArrowForward className="ml-3 size-5 text-[#85888b]" />
        <MdRefresh className="ml-3 size-5 text-white" />
        <div className="ml-[12px] flex h-7 w-[1275px] items-center rounded-full bg-[#282c2f] pr-[10px] pl-[11px]">
          <MdLock className="size-[14px] text-[#dfe1e5]" />
          <span className="ml-[9px] flex-1 text-[14px] tracking-[-0.06px] text-[#9aa0a6]"><span className="text-[#e8eaed]">https</span>://<span className="text-white">hestia.speckle.works</span>/#/view/BBnqvGqP_e</span>
          <MdStarBorder className="size-[17px] text-[#c8cbce]" />
        </div>
        <div className="ml-[13px] flex gap-[14px]">
          {EXT.map((e, i) => <svg key={i} className="size-[18px]" viewBox="0 0 18 18">{e}</svg>)}
        </div>
        <div className="ml-[13px] h-[18px] w-px bg-[#6b6e70]" />
        <svg className="ml-[12px] size-5 rounded-full" viewBox="0 0 20 20"><rect width="20" height="20" fill="#a5a5a5" /><path d="M0 0h7v20H0z" fill="#bdbdbd" /><path d="M2 20q0-6 5-7l1-2-1-3Q6 2 10 2t4 5l-1 4v2q5 1 5 7z" fill="#222" /><path d="M8.500 6h3.500v3l-1.500 2-2-2z" fill="#6a6a6a" /></svg>
        <MdMoreVert className="ml-[12px] size-[21px] text-white" />
      </div>
    </header>
  );
}

export default function App() {
  return (
    <div className="h-[1289px] w-[2032px] overflow-hidden bg-white pt-[37px] pl-[55px] font-[Roboto,sans-serif]">
      <div className="h-[1179px] w-[1922px] rounded-[6px] shadow-[0_0_3px_rgba(0,0,0,0.4),0_22px_32px_rgba(0,0,0,0.48),0_10px_36px_rgba(0,0,0,0.36)]">
        <div className="flex size-full flex-col overflow-hidden rounded-[6px] border border-black bg-[#fafafa]">
          <Chrome />
          <div className="flex min-h-0 flex-1">
            <Sidebar />
            <main className="flex w-[1605px] flex-col">
              <div className="flex h-16 shrink-0 items-center bg-[#f5f5f5] pl-6 text-[#212121]">
                <MdMenu className="size-6" />
                <span className="mt-px ml-8 w-[90px] text-[20px] font-light tracking-[0.5px]">VIEWER</span>
                <span className="mt-[5px] flex-1 text-[13px] font-medium tracking-[0.03px]">CLOSE CONTROLS</span>
                <span className="mt-[2px] w-[89px] text-[13px] font-medium">LOGOUT</span>
                <MdWbSunny className="mr-[24px] size-4" />
              </div>
              <div className="relative flex min-h-0 flex-1 overflow-hidden">
                <div className="-mt-[13px] flex w-[384px] shrink-0 flex-col gap-4 pl-[31px]">
                  {LAYERS.map((l, i) => <Card key={i} l={l} />)}
                </div>
                <Model />
                <button className="absolute right-[16px] bottom-[16px] flex size-14 items-center justify-center rounded-full bg-[#f5f5f5] shadow-[0_3px_5px_-1px_rgba(0,0,0,0.2),0_6px_10px_rgba(0,0,0,0.14),0_1px_18px_rgba(0,0,0,0.12)]">
                  <MdShare className="size-[22px] text-[#212121]" />
                </button>
              </div>
            </main>
            <div className="flex-1 border-l border-[#e6e6e6] bg-[#fafafa]" />
          </div>
        </div>
      </div>
    </div>
  );
}
